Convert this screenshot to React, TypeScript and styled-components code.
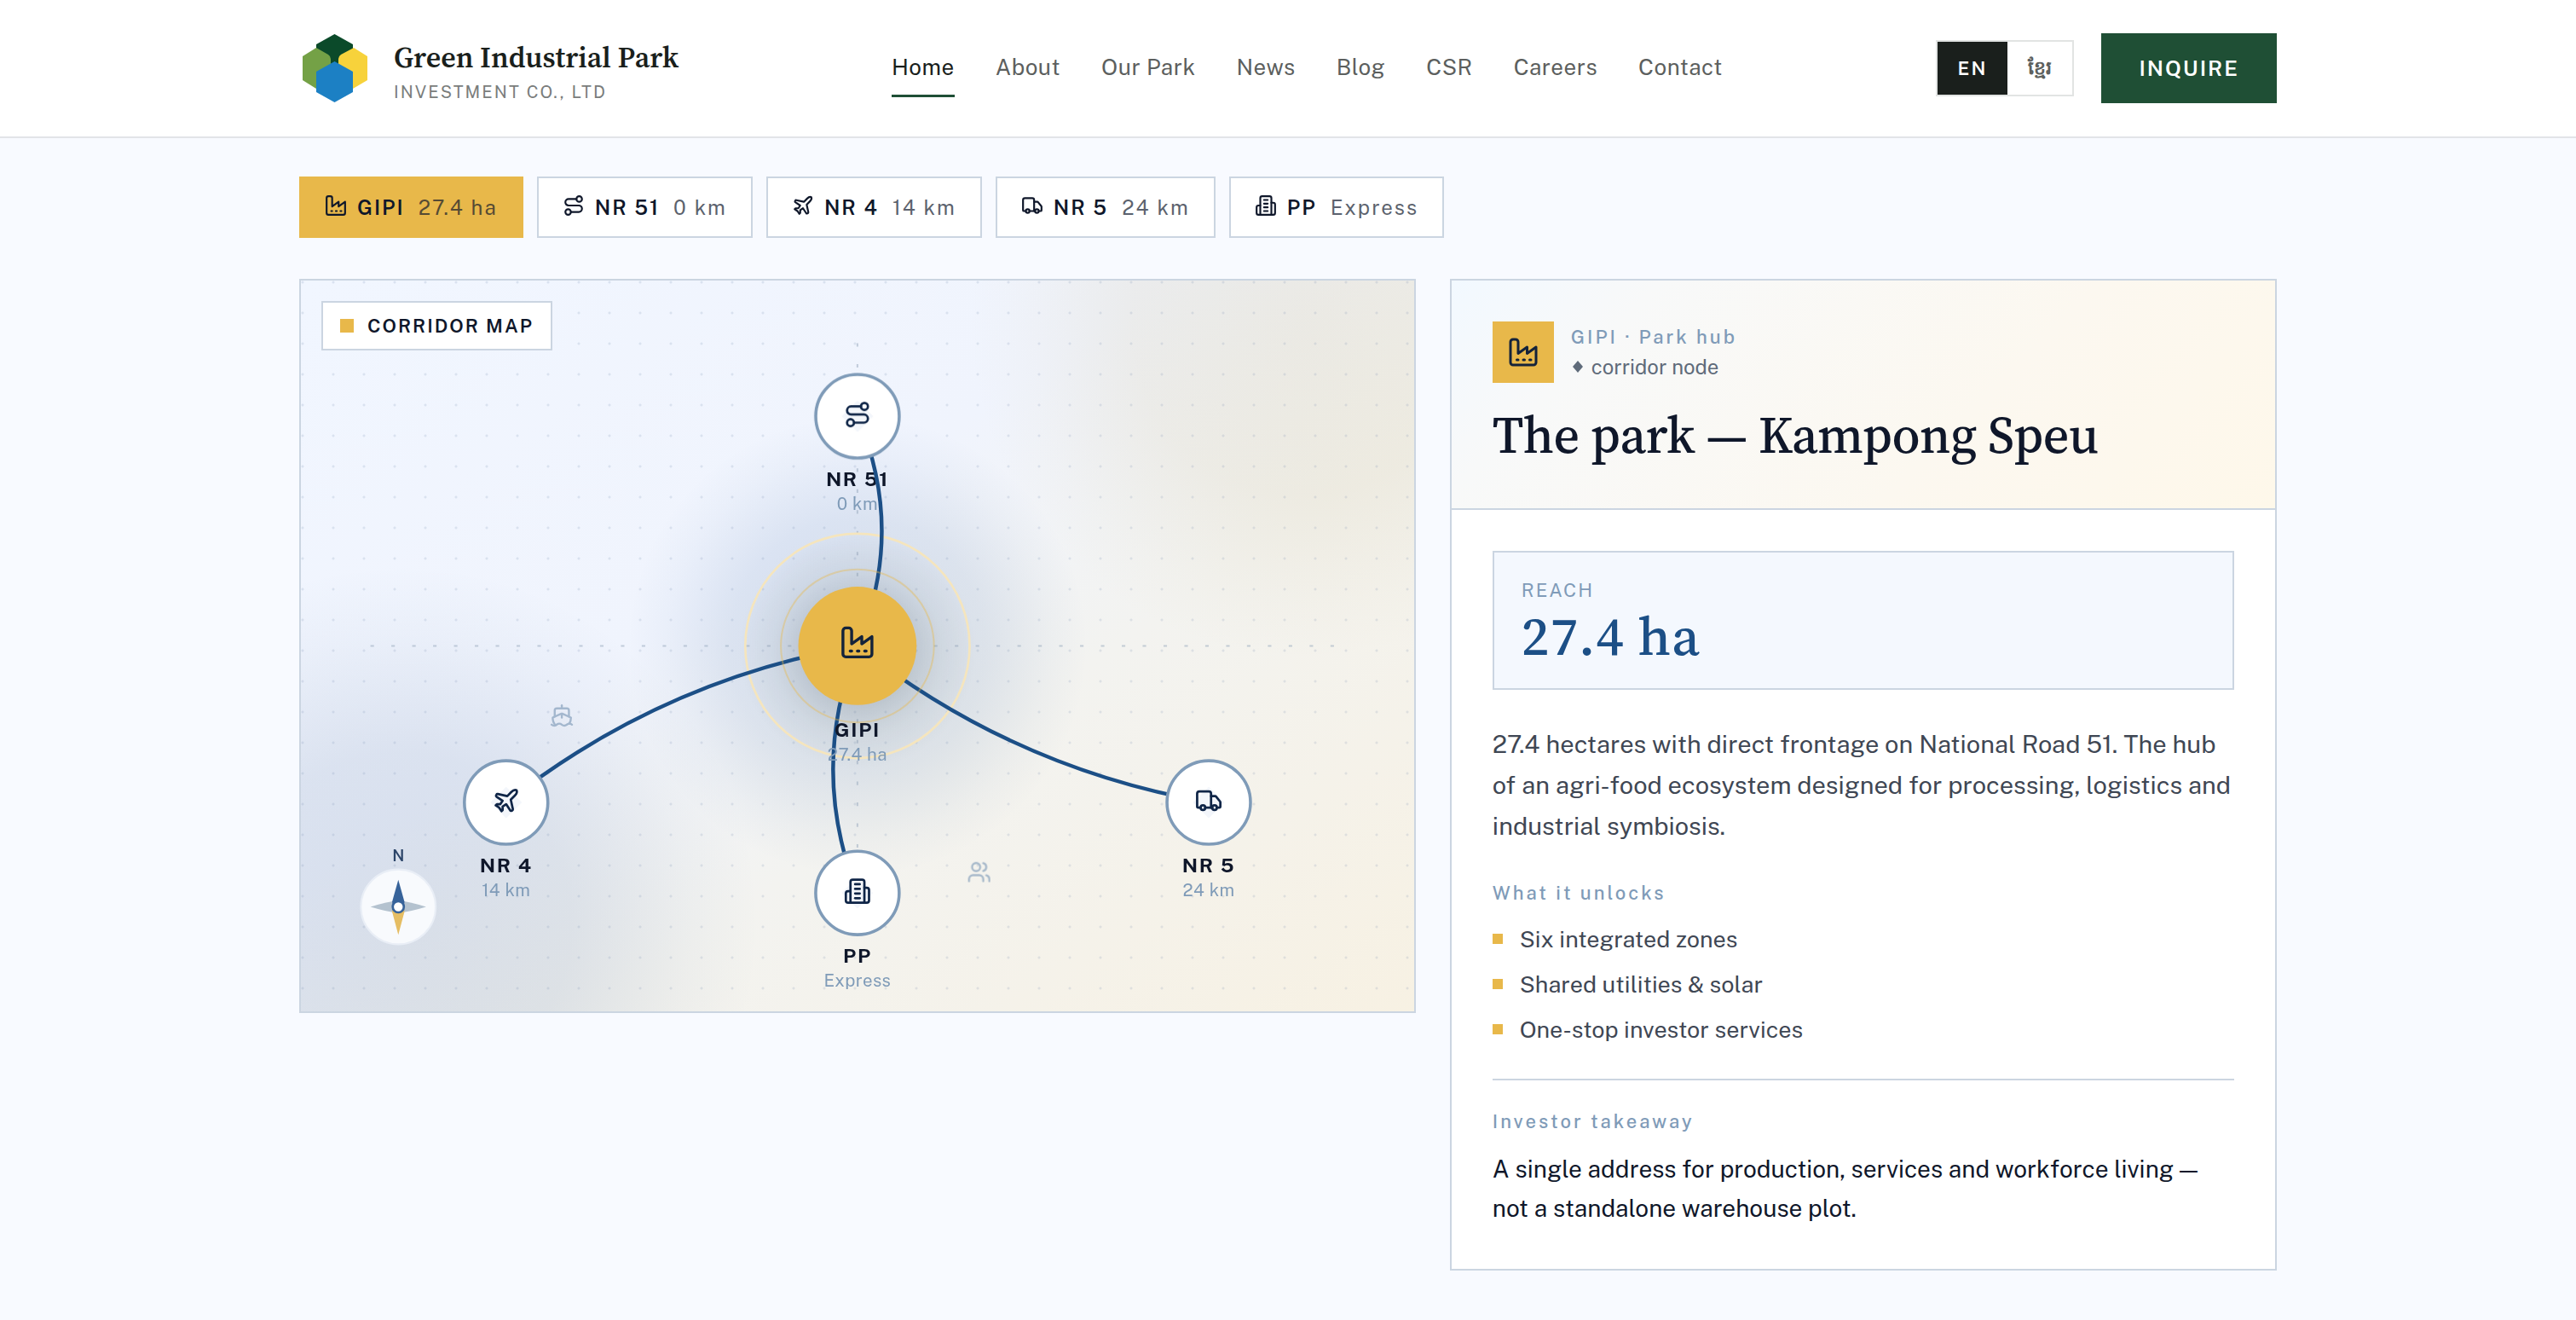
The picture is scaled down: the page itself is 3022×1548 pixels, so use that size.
import React, { useState } from "react";
import styled, { createGlobalStyle } from "styled-components";
import { Plane, Route, Ship, Truck, Users } from "lucide-react";

const color = {
  page: "#f8faff",
  ink: "#0f172a",
  body: "#3f4754",
  line: "#cbd5e1",
  steel: "#7f9bb8",
  navy: "#1c4f86",
  gold: "#e8b84a",
  forest: "#1f4f35",
};

const sans = `"Public Sans", Inter, "Liberation Sans", sans-serif`;
const serif = `"Source Serif 4", "Liberation Serif", serif`;

const GlobalStyle = createGlobalStyle`
  *, *::before, *::after { box-sizing: border-box; }
  body {
    margin: 0;
    background: ${color.page};
    color: ${color.ink};
    font-family: ${sans};
    -webkit-font-smoothing: antialiased;
  }
  h1, h2, h3, p, ul { margin: 0; padding: 0; }
  button { font: inherit; cursor: pointer; }
`;

const Container = styled.div`
  width: 100%;
  max-width: 2320px;
  margin: 0 auto;
`;

const Header = styled.header`
  background: #fff;
  border-bottom: 2px solid #e2e4e8;
`;

const HeaderRow = styled(Container)`
  display: flex;
  align-items: center;
  justify-content: space-between;
  height: 160px;
`;

const Brand = styled.a`
  display: flex;
  align-items: center;
  gap: 31px;
  padding-left: 4px;
  color: inherit;
  text-decoration: none;
`;

const BrandText = styled.span`
  display: flex;
  flex-direction: column;
  gap: 10px;
  padding-top: 8px;
`;

const BrandName = styled.span`
  font: 600 34px/38px ${serif};
  color: #1a1f1c;
`;

const BrandSub = styled.span`
  font-size: 20px;
  line-height: 24px;
  letter-spacing: 2px;
  color: #7a7d7c;
`;

const Nav = styled.nav`
  display: flex;
  gap: 48px;
`;

const NavLink = styled.a<{ $active?: boolean }>`
  padding: 16px 0;
  font-size: 26px;
  line-height: 32px;
  letter-spacing: 0.02em;
  color: ${(p) => (p.$active ? "#1a1f1c" : "#5c5f5e")};
  text-decoration: none;
  border-bottom: 3px solid ${(p) => (p.$active ? color.forest : "transparent")};
`;

const HeaderActions = styled.div`
  display: flex;
  align-items: center;
  gap: 32px;
`;

const LangSwitch = styled.div`
  display: flex;
  border: 2px solid #e2e4e3;
`;

const LangButton = styled.button<{ $active?: boolean }>`
  height: 62px;
  padding: 0 24px;
  border: 0;
  font-size: 22px;
  font-weight: 600;
  letter-spacing: 2px;
  background: ${(p) => (p.$active ? "#1a1f1c" : "#fff")};
  color: ${(p) => (p.$active ? "#fff" : "#5c5f5e")};

  &:lang(km) {
    padding-top: 4px;
    letter-spacing: 0;
  }
`;

const Inquire = styled.button`
  height: 82px;
  padding: 0 44px;
  border: 0;
  background: ${color.forest};
  color: #fff;
  font-size: 25px;
  font-weight: 600;
  letter-spacing: 2px;
`;

const Main = styled.main`
  padding: 45px 0 56px;
`;

const Tabs = styled.div`
  display: flex;
  gap: 16px;
`;

const Tab = styled.button<{ $active?: boolean }>`
  display: flex;
  align-items: center;
  height: 72px;
  padding: 0 28px;
  border: 2px solid ${(p) => (p.$active ? color.gold : color.line)};
  background: ${(p) => (p.$active ? color.gold : "#fff")};
  color: ${color.ink};
  font-size: 24px;
  font-weight: 600;
  letter-spacing: 2px;

  svg {
    width: 26px;
    height: 26px;
    margin: 0 12px 4px 0;
  }
`;

const TabValue = styled.span`
  margin-left: 16px;
  font-weight: 400;
  color: ${color.ink};
  opacity: 0.68;
`;

const Columns = styled.div`
  display: grid;
  grid-template-columns: 135fr 100fr;
  align-items: start;
  gap: 40px;
  margin-top: 48px;
`;

const MapCard = styled.section`
  position: relative;
  border: 2px solid ${color.line};
  background:
    radial-gradient(circle at 2px 2px, rgba(100, 125, 165, 0.16) 1px, transparent 2px) 0 0 / 36px 36px,
    radial-gradient(circle at 50% 50%, rgba(30, 80, 150, 0.15) 0, rgba(30, 80, 150, 0.1) 150px, rgba(30, 80, 150, 0.03) 225px, transparent 270px),
    radial-gradient(circle at 9% 88%, rgba(45, 80, 130, 0.13) 0, rgba(45, 80, 130, 0.11) 200px, rgba(45, 80, 130, 0.03) 340px, transparent 420px),
    radial-gradient(circle at 90% 6%, rgba(205, 188, 140, 0.18) 0, rgba(205, 188, 140, 0.15) 200px, rgba(205, 188, 140, 0.04) 330px, transparent 390px),
    linear-gradient(145deg, #f1f6ff 0%, #f0f4fd 40%, #f3f3f0 62%, #f7f1e3 100%);
`;

const MapBadge = styled.h3`
  position: absolute;
  top: 24px;
  left: 24px;
  display: flex;
  align-items: center;
  gap: 16px;
  height: 58px;
  padding: 0 20px;
  border: 2px solid ${color.line};
  background: #fff;
  font-size: 22px;
  font-weight: 600;
  letter-spacing: 2px;

  &::before {
    content: "";
    width: 16px;
    height: 16px;
    background: ${color.gold};
  }
`;

const MapSvg = styled.svg`
  display: block;
  width: 100%;
  height: auto;
  font-family: ${sans};
`;

const Panel = styled.article`
  border: 2px solid ${color.line};
  background: #fff;
`;

const PanelHead = styled.header`
  padding: 48px;
  border-bottom: 2px solid ${color.line};
  background: linear-gradient(135deg, #f2f9ff 0%, #f8f9f9 20%, #fcf8f0 62%, #fef8ea 100%);
`;

const PanelIdentity = styled.div`
  display: flex;
  align-items: center;
  gap: 20px;
  height: 72px;
`;

const PanelIcon = styled.span`
  display: grid;
  place-items: center;
  width: 72px;
  height: 72px;
  background: ${color.gold};
  color: #14233a;

  svg {
    width: 36px;
    height: 36px;
  }
`;

const Eyebrow = styled.p`
  font-size: 22px;
  font-weight: 500;
  line-height: 28px;
  letter-spacing: 3px;
  color: ${color.steel};
`;

const NodeKind = styled.p`
  display: flex;
  align-items: center;
  gap: 8px;
  margin: 7px 0 2px;
  font-size: 24px;
  line-height: 28px;
  color: #5f6b7a;

  svg {
    width: 16px;
    height: 16px;
  }
`;

const PanelTitle = styled.h1`
  margin-top: 24px;
  font: 500 60px/75px ${serif};
  letter-spacing: -0.01em;
`;

const PanelBody = styled.div`
  padding: 48px;
`;

const Reach = styled.div`
  height: 163px;
  padding: 30px 32px;
  border: 2px solid ${color.line};
  background: #f4f8fe;
`;

const ReachLabel = styled.p`
  font-size: 22px;
  line-height: 28px;
  letter-spacing: 2px;
  color: ${color.steel};
`;

const ReachValue = styled.p`
  margin-top: 8px;
  font: 500 64px/64px ${serif};
  letter-spacing: 1px;
  color: ${color.navy};
`;

const Lead = styled.p`
  margin: 40px 0;
  font-size: 29px;
  line-height: 48px;
  color: ${color.body};
`;

const Unlocks = styled.ul`
  display: grid;
  gap: 13px;
  margin: 20px 0 38px;
  list-style: none;
`;

const Unlock = styled.li`
  display: flex;
  align-items: center;
  gap: 20px;
  font-size: 27px;
  line-height: 40px;
  color: ${color.body};

  &::before {
    content: "";
    width: 12px;
    height: 12px;
    background: ${color.gold};
  }
`;

const Takeaway = styled.footer`
  padding-top: 34px;
  border-top: 2px solid ${color.line};
`;

const TakeawayText = styled.p`
  margin-top: 19px;
  font-size: 28px;
  line-height: 46px;
`;

type IconProps = React.SVGProps<SVGSVGElement>;

const StrokeIcon = ({ children, ...props }: IconProps) => (
  <svg
    viewBox="0 0 24 24"
    width={24}
    height={24}
    fill="none"
    stroke="currentColor"
    strokeWidth={2}
    strokeLinecap="round"
    strokeLinejoin="round"
    aria-hidden="true"
    {...props}
  >
    {children}
  </svg>
);

const Factory = (props: IconProps) => (
  <StrokeIcon {...props}>
    <path d="M2 20a2 2 0 0 0 2 2h16a2 2 0 0 0 2-2V8l-7 5V8l-7 5V4a2 2 0 0 0-2-2H4a2 2 0 0 0-2 2Z" />
    <path d="M17 18h1" />
    <path d="M12 18h1" />
    <path d="M7 18h1" />
  </StrokeIcon>
);

const Building = (props: IconProps) => (
  <StrokeIcon {...props}>
    <path d="M6 22V4a2 2 0 0 1 2-2h8a2 2 0 0 1 2 2v18Z" />
    <path d="M6 12H4a2 2 0 0 0-2 2v6a2 2 0 0 0 2 2h2" />
    <path d="M18 9h2a2 2 0 0 1 2 2v9a2 2 0 0 1-2 2h-2" />
    <path d="M10 6h4" />
    <path d="M10 10h4" />
    <path d="M10 14h4" />
    <path d="M10 18h4" />
  </StrokeIcon>
);

const Logo = () => (
  <svg width="76" height="80" viewBox="0 0 76 80" aria-hidden="true">
    <path d="M37.500 0 59 12v22L37.500 46 16 34V12Z" fill="#0b4a2a" />
    <path d="M16 16 30 24q3 2 3 5V54L16 64 0 54V26Z" fill="#74a146" />
    <path d="M60 16 45 24q-3 2-3 5V54L59 64 76 54V26Z" fill="#f7d23b" />
    <path d="M37.500 32 59 44v24L37.500 80 16 68V44Z" fill="#1c80c4" />
  </svg>
);

interface CorridorNode {
  id: string;
  value: string;
  icon: React.ComponentType<any>;
  x: number;
  y: number;
}

const nodes: CorridorNode[] = [
  { id: "GIPI", value: "27.4 ha", icon: Factory, x: 320, y: 210 },
  { id: "NR 51", value: "0 km", icon: Route, x: 320, y: 78 },
  { id: "NR 4", value: "14 km", icon: Plane, x: 118, y: 300 },
  { id: "NR 5", value: "24 km", icon: Truck, x: 522, y: 300 },
  { id: "PP", value: "Express", icon: Building, x: 320, y: 352 },
];

const [hub, ...spokes] = nodes;
const navItems = ["Home", "About", "Our Park", "News", "Blog", "CSR", "Careers", "Contact"];

// Bows each route 28 units to the right of its direction of travel.
const routePath = (to: CorridorNode) => {
  const dx = to.x - hub.x;
  const dy = to.y - hub.y;
  const len = Math.hypot(dx, dy);
  const cx = (hub.x + to.x) / 2 - (dy / len) * 28;
  const cy = (hub.y + to.y) / 2 + (dx / len) * 28;
  return `M${hub.x} ${hub.y}Q${cx} ${cy} ${to.x} ${to.y}`;
};

const NodeDisc = ({ node }: { node: CorridorNode }) => {
  const isHub = node === hub;
  const size = isHub ? 20 : 16;
  const Icon = node.icon;
  return (
    <g>
      {isHub ? (
        <circle cx={node.x} cy={node.y} r={34} fill={color.gold} />
      ) : (
        <>
          <circle cx={node.x} cy={node.y} r={24} fill="#fff" stroke={color.steel} strokeWidth={1.75} />
          <path d={`M${node.x} ${node.y - 9}l9 9-9 9-9-9Z`} fill="#f3f6fb" />
        </>
      )}
      <Icon
        x={node.x - size / 2}
        y={node.y - size / 2 - (isHub ? 2 : 1)}
        width={size}
        height={size}
        color={isHub ? "#14233a" : "#0f2547"}
      />
    </g>
  );
};

const NodeLabel = ({ node }: { node: CorridorNode }) => {
  const labelY = node.y + (node === hub ? 52 : 40);
  return (
    <g textAnchor="middle">
      <text x={node.x} y={labelY} fontSize={11.5} fontWeight={700} letterSpacing={0.8} fill={color.ink}>
        {node.id}
      </text>
      <text x={node.x} y={labelY + 14} fontSize={10} letterSpacing={0.2} fill={color.steel}>
        {node.value}
      </text>
    </g>
  );
};

const CorridorMap = () => (
  <MapCard aria-label="Corridor map">
    <MapSvg viewBox="0 0 640 420" role="img" aria-label="Roads from the park">
      <defs>
        <radialGradient id="hubShade">
          <stop offset="0.45" stopColor="#465458" stopOpacity="0.18" />
          <stop offset="0.72" stopColor="#5f7070" stopOpacity="0.07" />
          <stop offset="1" stopColor="#5f7070" stopOpacity="0" />
        </radialGradient>
      </defs>
      <g stroke="#9aabbf" strokeOpacity={0.55} strokeWidth={1} strokeDasharray="2 10">
        <path d="M40 210H600" />
        <path d="M320 36V384" />
      </g>
      <g color={color.steel} opacity={0.65}>
        <Ship x={143} y={243} width={14} height={14} />
        <Users x={383} y={333} width={14} height={14} />
      </g>
      <circle cx={320} cy={213} r={68} fill="url(#hubShade)" />
      <circle cx={320} cy={210} r={64.5} fill="none" stroke="#f5e5bd" strokeWidth={1.3} />
      {spokes.map((n) => (
        <NodeLabel key={n.id} node={n} />
      ))}
      {spokes.map((n) => (
        <path key={n.id} d={routePath(n)} fill="none" stroke={color.navy} strokeWidth={2.2} />
      ))}
      <circle cx={320} cy={210} r={44} fill="none" stroke={color.gold} strokeOpacity={0.4} />
      {nodes.map((n) => (
        <NodeDisc key={n.id} node={n} />
      ))}
      <NodeLabel node={hub} />
      <g>
        <text x={56} y={334} textAnchor="middle" fontSize={9} fontWeight={600} fill="#2b4468">
          N
        </text>
        <circle cx={56} cy={360} r={21.5} fill="#f8fafd" stroke="#e9eef6" />
        <path d="M40 360Q50 357 56 356.500 62 357 72 360 62 363 56 363.500 50 363 40 360Z" fill="#b4c2cf" />
        <path d="M56 376 52.500 363 52.700 360H59.300L59.500 363Z" fill="#e5bd63" />
        <path d="M56 344.500 52.500 357 52.700 360H59.300L59.500 357Z" fill="#37639a" />
        <circle cx={56} cy={360} r={3.2} fill="#fff" stroke="#37639a" strokeWidth={1.3} />
      </g>
    </MapSvg>
    <MapBadge>CORRIDOR MAP</MapBadge>
  </MapCard>
);

export default function App() {
  const [active, setActive] = useState("GIPI");
  return (
    <>
      <GlobalStyle />
      <Header>
        <HeaderRow>
          <Brand href="#">
            <Logo />
            <BrandText>
              <BrandName>Green Industrial Park</BrandName>
              <BrandSub>INVESTMENT CO., LTD</BrandSub>
            </BrandText>
          </Brand>
          <Nav>
            {navItems.map((item, i) => (
              <NavLink key={item} href="#" $active={i === 0}>
                {item}
              </NavLink>
            ))}
          </Nav>
          <HeaderActions>
            <LangSwitch>
              <LangButton $active>EN</LangButton>
              <LangButton lang="km">ខ្មែរ</LangButton>
            </LangSwitch>
            <Inquire>INQUIRE</Inquire>
          </HeaderActions>
        </HeaderRow>
      </Header>
      <Main>
        <Container>
          <Tabs>
            {nodes.map(({ id, value, icon: Icon }) => (
              <Tab key={id} $active={id === active} onClick={() => setActive(id)}>
                <Icon />
                {id}
                <TabValue>{value}</TabValue>
              </Tab>
            ))}
          </Tabs>
          <Columns>
            <CorridorMap />
            <Panel>
              <PanelHead>
                <PanelIdentity>
                  <PanelIcon>
                    <Factory />
                  </PanelIcon>
                  <div>
                    <Eyebrow>GIPI · Park hub</Eyebrow>
                    <NodeKind>
                      <svg viewBox="0 0 16 16" aria-hidden="true">
                        <path d="M8 1l6 7-6 7-6-7Z" fill="currentColor" />
                      </svg>
                      corridor node
                    </NodeKind>
                  </div>
                </PanelIdentity>
                <PanelTitle>The park — Kampong Speu</PanelTitle>
              </PanelHead>
              <PanelBody>
                <Reach>
                  <ReachLabel>REACH</ReachLabel>
                  <ReachValue>27.4 ha</ReachValue>
                </Reach>
                <Lead>
                  27.4 hectares with direct frontage on National Road 51. The hub of an agri-food
                  ecosystem designed for processing, logistics and industrial symbiosis.
                </Lead>
                <Eyebrow>What it unlocks</Eyebrow>
                <Unlocks>
                  <Unlock>Six integrated zones</Unlock>
                  <Unlock>Shared utilities &amp; solar</Unlock>
                  <Unlock>One-stop investor services</Unlock>
                </Unlocks>
                <Takeaway>
                  <Eyebrow>Investor takeaway</Eyebrow>
                  <TakeawayText>
                    A single address for production, services and workforce living — not a
                    standalone warehouse plot.
                  </TakeawayText>
                </Takeaway>
              </PanelBody>
            </Panel>
          </Columns>
        </Container>
      </Main>
    </>
  );
}
